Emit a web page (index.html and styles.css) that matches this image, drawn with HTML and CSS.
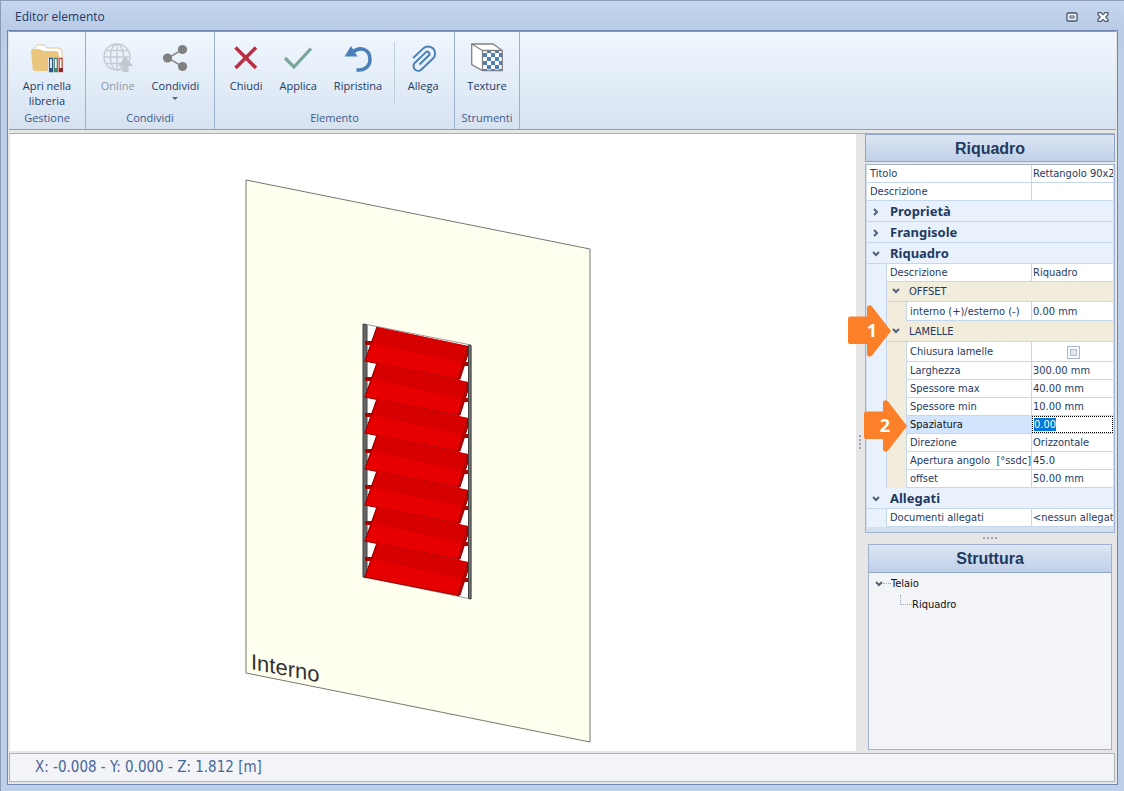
FILE: index.html
```html
<!DOCTYPE html>
<html lang="it">
<head>
<meta charset="utf-8">
<title>Editor elemento</title>
<link rel="stylesheet" href="styles.css">
</head>
<body>
<div class="window">
  <header class="titlebar">
    <h1 class="titlebar-text">Editor elemento</h1>
    <button class="win-btn" type="button" aria-label="Ingrandisci">
      <svg width="12" height="10" viewBox="0 0 12 10"><rect x="1" y="1" width="10" height="8" rx="1" fill="#f2f6fb" stroke="#4a5870" stroke-width="1.3"/><rect x="4" y="4" width="4" height="2" fill="#fff" stroke="#4a5870"/></svg>
    </button>
    <button class="win-btn" type="button" aria-label="Chiudi finestra">
      <svg width="12" height="10" viewBox="0 0 12 10"><path d="M1 .7h3l2 2 2-2h3v2L8.700 5 11 7.300v2H8l-2-2-2 2H1v-2L3.300 5 1 2.700z" fill="#fff" stroke="#4a5870" stroke-width="1.200"/></svg>
    </button>
  </header>

  <div class="frame">
    <nav class="ribbon">
      <section class="group group-gestione">
        <div class="tools">
          <button class="tool" type="button">
            <svg class="icon" viewBox="0 0 32 32"><path d="M4 8Q4 3 7 3h6l3 3h11q4 0 4 4v12H4z" fill="#fff" stroke="#eac886"/><path d="M0 9q0-2 2-2h7l3 2h13q2 0 2.500 2L30 27q0 2-2 2H4q-2 0-2.300-2z" fill="#ebc67f"/><path d="M17 16h15v14H17z" fill="#fff"/><g stroke-width="1.300"><path d="M18.500 16.500h3v13h-3z" fill="#fff" stroke="#31597f"/><path d="M23.300 16.500h3v13h-3z" fill="#fff" stroke="#4a8576"/><path d="M28.100 16.500h3v13h-3z" fill="#fff" stroke="#c54b38"/></g><path d="M18 26h4v4h-4z" fill="#31597f"/><path d="M23 26h4v4h-4z" fill="#4a8576"/><path d="M28 26h4v4h-4z" fill="#8c2b2b"/></svg>
            <span>Apri nella<br>libreria</span>
          </button>
        </div>
        <h2 class="group-name">Gestione</h2>
      </section>
      <section class="group group-condividi">
        <div class="tools">
          <button class="tool" type="button" disabled>
            <svg class="icon" viewBox="0 0 32 32"><g fill="none" stroke="#c6cbd4" stroke-width="1.400"><circle cx="15" cy="15" r="13"/><ellipse cx="15" cy="15" rx="6.500" ry="13"/><path d="M15 2v26M2 15h26M4 8.500h22M4 21.500h22"/></g><path d="M23.500 14.500 31 24h-4.500v6h-6v-6H16z" fill="#c4c8cf"/></svg>
            <span>Online</span>
          </button>
          <button class="tool" type="button">
            <svg class="icon" viewBox="0 0 32 32"><path d="M23.500 7.500 9 16l14.500 8.500" fill="none" stroke="#8b8b8b" stroke-width="1.500"/><g fill="#808080"><circle cx="23.500" cy="7.500" r="4.600"/><circle cx="8.500" cy="16" r="4.600"/><circle cx="23.500" cy="24.500" r="4.600"/></g></svg>
            <span>Condividi</span>
            <svg class="caret" viewBox="0 0 6 4"><path d="M0 0h6L3 3z" fill="#56657d"/></svg>
          </button>
        </div>
        <h2 class="group-name">Condividi</h2>
      </section>
      <section class="group group-elemento">
        <div class="tools">
          <button class="tool" type="button">
            <svg class="icon" viewBox="0 0 32 32"><path d="M5.500 5.500 26 26M26 5.500 5.500 26" stroke="#b62f43" stroke-width="3.500"/></svg>
            <span>Chiudi</span>
          </button>
          <button class="tool" type="button">
            <svg class="icon" viewBox="0 0 32 32"><path d="m3 16 9 9L29 6.500" fill="none" stroke="#78a799" stroke-width="3.200"/></svg>
            <span>Applica</span>
          </button>
          <button class="tool" type="button">
            <svg class="icon" viewBox="0 0 32 32"><path d="M11 10C17 4.500 28 6 28 17.500c0 7-6 11.500-13.500 10.300" fill="none" stroke="#4d80b9" stroke-width="3.600"/><path d="M9 4 15.500 14.500H2.500z" fill="#4d80b9"/></svg>
            <span>Ripristina</span>
          </button>
          <span class="divider"></span>
          <button class="tool" type="button">
            <svg class="icon" viewBox="0 0 32 32"><path transform="translate(14.500 17.500) rotate(-44)" d="M-5 2.200H8a2.200 2.200 0 0 0 0-4.400H-7a4.700 4.700 0 0 0 0 9.400H9a7 7 0 0 0 0-14H-5" fill="none" stroke="#4d80b9" stroke-width="2"/></svg>
            <span>Allega</span>
          </button>
        </div>
        <h2 class="group-name">Elemento</h2>
      </section>
      <section class="group group-strumenti">
        <div class="tools">
          <button class="tool" type="button">
            <svg class="icon" viewBox="0 0 32 32"><path d="M0.700 2H22l9.300 6.500v20H11.500L.7 22.500zM.7 2l10.800 6.500v20M11.500 8.500h19.800" fill="#fff" stroke="#828282" stroke-width="1.300"/><path transform="translate(0 1)" d="M12 10h4v4h-4zM20 10h4v4h-4zM28 10h3v4h-3zM16 14h4v4h-4zM24 14h4v4h-4zM12 18h4v4h-4zM20 18h4v4h-4zM28 18h3v4h-3zM16 22h4v4h-4zM24 22h4v4h-4zM16 8h4v2h-4zM24 8h4v2h-4zM12 26h4v1.500h-4zM20 26h4v1.500h-4zM28 26h3v1.500h-3z" fill="#4d80b9"/></svg>
            <span>Texture</span>
          </button>
        </div>
        <h2 class="group-name">Strumenti</h2>
      </section>
    </nav>

    <main class="workspace">
      <div class="canvas">
        <svg class="drawing" viewBox="10 134 846 617" preserveAspectRatio="xMinYMin meet">
          <defs>
            <g id="slat">
              <path d="M365 341h8v4h-8zM461 362h8v4h-8z" fill="#b00000"/>
              <path d="M377 327 468 346 468 353 459 380 365 361z" fill="#e60000"/>
              <path d="M377 327 468 346 464 363 371 343z" fill="#d60000"/>
              <path d="M468 346v8l-8 25h-2z" fill="#c60000" stroke="#980000"/>
              <path d="M377 327 365 361 459 379.500" fill="none" stroke="#a00000" stroke-width="1.200"/>
            </g>
          </defs>
          <path d="M246 180 590 249V742L246 673z" fill="#fffff0" stroke="#77776f"/>
          <path d="M364 324 471 345V599L364 577z" fill="#fff" stroke="#999"/>
          <path d="M363 324l4 1V578l-4-1z" fill="#666" stroke="#404040"/>
          <use href="#slat"/>
          <use href="#slat" y="36"/>
          <use href="#slat" y="72"/>
          <use href="#slat" y="108"/>
          <use href="#slat" y="144"/>
          <use href="#slat" y="180"/>
          <use href="#slat" y="216"/>
          <path d="M468.500 345l2.500.5V599l-2.500-.5z" fill="#777" stroke="#404040"/>
          <text class="wall-label" transform="translate(251 669) skewY(11)">Interno</text>
        </svg>
      </div>
      <div class="splitter-v"><svg width="3" height="15" viewBox="0 0 3 15"><path d="M0 0h2v2H0zM0 4h2v2H0zM0 8h2v2H0zM0 12h2v2H0z" fill="#9aa5b8"/></svg></div>

      <aside class="side">
        <h2 class="panel-title">Riquadro</h2>
        <div class="props">
          <table class="grid">
            <colgroup><col class="c-indent"><col class="c-indent"><col class="c-label"><col></colgroup>
            <tbody>
              <tr><td class="lbl" colspan="3">Titolo</td><td class="val">Rettangolo 90x2</td></tr>
              <tr><td class="lbl" colspan="3">Descrizione</td><td class="val"></td></tr>
              <tr class="cat"><th colspan="4"><svg class="chev" viewBox="0 0 8 8"><path d="m2 1 3 3-3 3"/></svg>Proprietà</th></tr>
              <tr class="cat"><th colspan="4"><svg class="chev" viewBox="0 0 8 8"><path d="m2 1 3 3-3 3"/></svg>Frangisole</th></tr>
              <tr class="cat"><th colspan="4"><svg class="chev" viewBox="0 0 8 8"><path d="m1 2 3 3 3-3"/></svg>Riquadro</th></tr>
              <tr><td class="ind"></td><td class="lbl" colspan="2">Descrizione</td><td class="val">Riquadro</td></tr>
              <tr class="sub sub-first"><td class="ind"></td><th colspan="3"><svg class="chev" viewBox="0 0 8 8"><path d="m1 2 3 3 3-3"/></svg>OFFSET</th></tr>
              <tr class="mid"><td class="ind"></td><td class="ind2"></td><td class="lbl">interno (+)/esterno (-)</td><td class="val">0.00 mm</td></tr>
              <tr class="sub"><td class="ind"></td><th class="anchor" colspan="3"><svg class="chev" viewBox="0 0 8 8"><path d="m1 2 3 3 3-3"/></svg>LAMELLE
                <svg class="marker marker-one" viewBox="0 0 44 52"><path d="M2 11.500H19V2q2-3 5-.5L43 26 24 50.500q-3 2.500-5-.5V39H2q-2 0-2-2V13.500q0-2 2-2z"/><text x="24" y="32">1</text></svg></th></tr>
              <tr class="tall"><td class="ind"></td><td class="ind2"></td><td class="lbl"><label for="chiusura">Chiusura lamelle</label></td><td class="val val-check"><input class="check" type="checkbox" id="chiusura"></td></tr>
              <tr><td class="ind"></td><td class="ind2"></td><td class="lbl">Larghezza</td><td class="val">300.00 mm</td></tr>
              <tr><td class="ind"></td><td class="ind2"></td><td class="lbl">Spessore max</td><td class="val">40.00 mm</td></tr>
              <tr><td class="ind"></td><td class="ind2"></td><td class="lbl">Spessore min</td><td class="val">10.00 mm</td></tr>
              <tr class="active"><td class="ind"></td><td class="ind2"></td><td class="lbl anchor"><label for="spaziatura">Spaziatura</label>
                <svg class="marker marker-two" viewBox="0 0 44 52"><path d="M2 11.500H19V2q2-3 5-.5L43 26 24 50.500q-3 2.500-5-.5V39H2q-2 0-2-2V13.500q0-2 2-2z"/><text x="21" y="32">2</text></svg></td><td class="val val-edit"><input class="edit" type="text" id="spaziatura" value="0.00"></td></tr>
              <tr><td class="ind"></td><td class="ind2"></td><td class="lbl">Direzione</td><td class="val">Orizzontale</td></tr>
              <tr><td class="ind"></td><td class="ind2"></td><td class="lbl">Apertura angolo &nbsp;[°ssdc]</td><td class="val">45.0</td></tr>
              <tr><td class="ind"></td><td class="ind2"></td><td class="lbl">offset</td><td class="val">50.00 mm</td></tr>
              <tr class="cat"><th colspan="4"><svg class="chev" viewBox="0 0 8 8"><path d="m1 2 3 3 3-3"/></svg>Allegati</th></tr>
              <tr><td class="ind"></td><td class="lbl" colspan="2">Documenti allegati</td><td class="val">&lt;nessun allegat</td></tr>
            </tbody>
          </table>
        </div>
        <div class="splitter-h"><svg width="15" height="3" viewBox="0 0 15 3"><path d="M0 0h2v2H0zM4 0h2v2H4zM8 0h2v2H8zM12 0h2v2h-2z" fill="#9aa5b8"/></svg></div>
        <section class="tree-panel">
          <h2 class="tree-title">Struttura</h2>
          <ul class="tree">
            <li class="node"><svg class="chev" viewBox="0 0 8 8"><path d="m1 2 3 3 3-3"/></svg><span class="link-h"></span>Telaio</li>
            <li class="node node-child"><span class="link-l"></span>Riquadro</li>
          </ul>
        </section>
      </aside>
    </main>

    <footer class="status">X: -0.008 - Y: 0.000 - Z: 1.812 [m]</footer>
  </div>
</div>
<script src="main.js"></script>
</body>
</html>
```
FILE: styles.css
```css
* { box-sizing: border-box; }
body {
  margin: 0;
  color: #1f3a63;
  font: 11px/16px "DejaVu Sans Condensed", "DejaVu Sans", sans-serif;
}
h1, h2 { margin: 0; font-weight: normal; }
button { padding: 0; border: 0; background: none; color: inherit; font: inherit; }
svg { display: block; flex: none; }

.window {
  display: flex;
  flex-direction: column;
  min-height: 100vh;
  padding: 0 6px 6px;
  border-top: 1px solid #8c9cb4;
  border-left: 1px solid #8c9cb4;
  background: linear-gradient(#c5d6ed, #b9cce5 30px, #bdd0e9 60px);
}
.titlebar {
  display: flex;
  align-items: center;
  gap: 19px;
  height: 29px;
  padding: 3px 9px 0 8px;
}
.titlebar-text { flex: 1; font: 12px/16px "Open Sans", sans-serif; }

.frame {
  flex: 1;
  display: flex;
  flex-direction: column;
  border: 1px solid #6c88ae;
  background: #e6e6e6;
}

/* Ribbon */
.ribbon {
  display: flex;
  height: 99px;
  margin: 0 1px;
  border-top: 1px solid #7f9cc0;
  border-bottom: 1px solid #8aa0c0;
  background: linear-gradient(#eff6fd, #e3edf8 50px, #d7e2f1);
  font: 11px/15px "Open Sans", sans-serif;
}
.group {
  display: flex;
  flex-direction: column;
  justify-content: space-between;
  border-right: 1px solid #9db1cf;
}
.group-gestione { width: 77px; }
.group-condividi { width: 129px; }
.group-elemento { width: 240px; }
.group-strumenti { width: 65px; }
.group-name { padding-bottom: 3px; color: #3d5b8c; font-size: 11px; line-height: 16px; text-align: center; }
.tools { display: flex; justify-content: center; gap: 17px; padding-top: 10px; }
.tool { display: flex; flex-direction: column; align-items: center; gap: 4px; white-space: nowrap; }
.tool:disabled { color: #8e98a8; }
.icon { width: 32px; height: 32px; }
.caret { width: 6px; height: 4px; }
.divider { width: 1px; height: 62px; margin: 0 -5px; background: #c0cede; }

/* Workspace */
.workspace {
  flex: 1;
  display: grid;
  grid-template-columns: 1fr 9px 250px;
  margin: 3px 2px 0 1px;
  border-top: 1px solid #a8b0bc;
}
.canvas { margin-left: 1px; background: #fff; }
.drawing { width: 100%; height: 0; min-height: 100%; }
.wall-label { fill: #333; font: 22px "Liberation Sans", sans-serif; }
.splitter-v { display: grid; place-items: center; }

.side { display: flex; flex-direction: column; }
.panel-title, .tree-title {
  height: 28px;
  border: 1px solid #90a5c6;
  background: linear-gradient(#dce6f4, #c0d0e8);
  font: bold 16px/27px "Liberation Sans", sans-serif;
  color: #1f3a5f;
  text-align: center;
}
.props {
  margin-top: 2px;
  padding: 0 1px 5px;
  border: 1px solid #9fb2d0;
  background: #d5e0ef;
}
.grid { width: 100%; table-layout: fixed; border-spacing: 0; }
.c-indent { width: 20px; }
.c-label { width: 125px; }
.grid td, .grid th { height: 18px; padding: 1px 0 0; border-bottom: 1px solid #c5d7ed; line-height: 16px; }
.grid .lbl, .grid .val { overflow: hidden; border-right: 1px solid #c5d7ed; background: #fff; white-space: nowrap; }
.grid .lbl { padding-left: 3px; }
.grid .val { padding-left: 1px; border-right: 0; }
.grid .ind { border: 0; border-right: 1px solid #c5d7ed; background: #e9f2fc; }
.grid .ind2 { border: 0; border-right: 1px solid #c5d7ed; background: #f1ecdb; }
.grid .cat th {
  height: 21px;
  padding: 0 0 0 5px;
  background: #e9f2fc;
  font: bold 13px/20px "Noto Sans", sans-serif;
  text-align: left;
}
.chev { display: inline-block; width: 8px; height: 8px; fill: none; stroke: #51617a; stroke-width: 2; }
.cat .chev { margin-right: 10px; }
.grid .sub th { height: 21px; padding-left: 5px; background: #f1ecdb; font-weight: normal; text-align: left; }
.grid .sub-first th { height: 20px; }
.sub .chev { margin-right: 9px; }
.grid .mid td { height: 19px; }
.grid .tall td { height: 20px; }
.grid .active .lbl { background: #d3e5fd; color: #111; }
.grid .anchor { position: relative; overflow: visible; }
.grid .val-check { text-align: center; }
.check {
  appearance: none;
  display: block;
  width: 13px;
  height: 13px;
  margin: 0 auto;
  border: 1px solid #a9b8cf;
  background: #e2e5ea;
  box-shadow: inset 0 0 0 2px #f7f9fb, inset 0 0 0 3px #b3bdcb;
}
.grid .val-edit { padding: 0; }
.edit {
  display: block;
  width: 100%;
  height: 17px;
  padding: 0 1px;
  border: 1px dotted #000;
  outline: 0;
  background: #fff;
  color: #1f3a63;
  font: inherit;
}
.edit::selection { background: #0078d7; color: #fff; }

/* Step markers laid over the property grid */
.marker { position: absolute; z-index: 1; width: 44px; height: 52px; fill: #fb8029; }
.marker text { fill: #fff; font: bold 18px "Open Sans", sans-serif; text-anchor: middle; }
.marker-one { top: -16px; left: -39px; }
.marker-two { top: -16px; left: -43px; }

.splitter-h { display: grid; place-items: center; height: 11px; }
.tree-panel {
  flex: 1;
  margin: 0 3px 1px;
  border: 1px solid #9fb2d0;
  background: #f2f4f8;
}
.tree-title { border-width: 0 0 1px; }
.tree { margin: 0; padding: 0 0 0 6px; color: #111; list-style: none; }
.node { display: flex; align-items: center; height: 21px; }
.link-h { width: 8px; border-top: 1px dotted #9aa5b8; }
.node-child { padding-left: 25px; }
.link-l { width: 12px; height: 10px; margin-bottom: 10px; border: dotted #9aa5b8; border-width: 0 0 1px 1px; }

.status {
  margin: 2px;
  margin-left: 1px;
  padding-left: 25px;
  border: 1px solid #b0b3b8;
  background: #f2f4f8;
  color: #47669a;
  font: 15px/27px "DejaVu Sans Condensed", "DejaVu Sans", sans-serif;
}
```
FILE: main.js
```js
const field = document.getElementById("spaziatura");
field.focus();
field.select();
```
